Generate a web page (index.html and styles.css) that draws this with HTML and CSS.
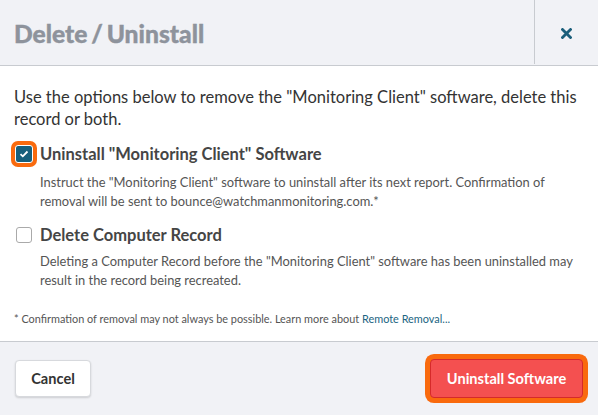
FILE: index.html
```html
<!DOCTYPE html>
<html>
<head>
<meta charset="utf-8">
<link rel="stylesheet" href="styles.css">
</head>
<body>
<div class="modal">
  <div class="header">
    <div class="title">Delete / Uninstall</div>
    <div class="close">
      <svg width="11" height="11" viewBox="0 0 11 11"><path d="M1.5 1.5 L9.5 9.5 M9.5 1.5 L1.5 9.5" stroke="#1b5f7b" stroke-width="2.8" stroke-linecap="square"/></svg>
    </div>
  </div>
  <div class="body">
    <p class="intro">Use the options below to remove the "Monitoring Client" software, delete this record or both.</p>
    <div class="option">
      <div class="row">
        <span class="check checked">
          <svg width="10" height="8" viewBox="0 0 10 8"><path d="M1.5 4.2 L3.8 6.3 L8.5 1.5" stroke="#fff" stroke-width="1.8" fill="none"/></svg>
        </span>
        <span class="label">Uninstall "Monitoring Client" Software</span>
      </div>
      <p class="desc">Instruct the "Monitoring Client" software to uninstall after its next report. Confirmation of removal will be sent to bounce@watchmanmonitoring.com.*</p>
    </div>
    <div class="option second">
      <div class="row">
        <span class="check"></span>
        <span class="label">Delete Computer Record</span>
      </div>
      <p class="desc">Deleting a Computer Record before the "Monitoring Client" software has been uninstalled may result in the record being recreated.</p>
    </div>
    <p class="note">* Confirmation of removal may not always be possible. Learn more about <a class="link">Remote Removal...</a></p>
  </div>
  <div class="footer">
    <button class="btn cancel">Cancel</button>
    <button class="btn danger">Uninstall Software</button>
  </div>
</div>
</body>
</html>
```
FILE: styles.css
```css
* { box-sizing: border-box; }
html, body { margin: 0; padding: 0; }
body {
  width: 598px;
  height: 415px;
  font-family: Lato, "Liberation Sans", sans-serif;
  background: #fff;
  overflow: hidden;
}
.modal { display: flex; flex-direction: column; height: 415px; }
.header {
  height: 66px;
  background: #f1f2f6;
  border-bottom: 1px solid #c8cbd0;
  display: flex;
  align-items: stretch;
}
.title {
  flex: 1;
  padding-left: 14px;
  display: flex;
  align-items: center;
  font-size: 24.6px;
  font-weight: 900;
  color: #8e939c;
  word-spacing: -2px;
  padding-top: 1px;
  -webkit-text-stroke: 0.4px #8e939c;
}
.close {
  width: 64px;
  border-left: 1px solid #c8cbd0;
  display: flex;
  align-items: center;
  justify-content: center;
  margin-bottom: 1px;
  padding-top: 2px;
}
.body {
  padding: 20px 14px 0 14px;
  height: 275px;
}
.intro {
  margin: 0;
  font-size: 16.5px;
  line-height: 22px;
  color: #333;
}
.option { margin-top: 12px; }
.option.second { margin-top: 13px; }
.row { display: flex; align-items: center; gap: 8px; height: 24px; }
.check {
  width: 16px;
  height: 16px;
  margin-left: 2px;
  border: 1px solid #aaa;
  border-radius: 3px;
  background: #fff;
  display: flex;
  align-items: center;
  justify-content: center;
}
.check.checked {
  width: 18px;
  height: 18px;
  margin-left: 1px;
  margin-right: -1px;
  background: #175f7c;
  border: 1px solid #fff;
  border-radius: 3px;
  box-shadow: 0 0 0 4px #f96a0e;
}
.label {
  font-size: 16.5px;
  font-weight: 700;
  color: #454545;
}
.desc {
  margin: 7px 0 0 26px;
  font-size: 12.9px;
  line-height: 18.5px;
  color: #555;
}
.second .desc { margin-top: 5px; }
.note {
  margin: 23px 0 0 0;
  font-size: 10.9px;
  color: #555;
}
.link { color: #1c6582; }
.footer {
  flex: 1;
  background: #f1f2f6;
  border-top: 1px solid #c8cbd0;
  display: flex;
  align-items: center;
  justify-content: space-between;
  padding: 0 15px 0 15px;
}
.btn {
  font-family: Lato, "Liberation Sans", sans-serif;
  font-size: 14.6px;
  font-weight: 700;
  border-radius: 4px;
  cursor: pointer;
}
.cancel {
  width: 76px;
  height: 37px;
  background: #fff;
  border: 1px solid #d7d9dd;
  color: #333;
  box-shadow: 0 1px 2px rgba(0,0,0,0.15);
}
.danger {
  width: 153px;
  height: 39px;
  margin-right: 0;
  background: #f45050;
  border: 1px solid #d62a2a;
  color: #fff;
  box-shadow: 0 0 0 5px #f96a0e;
}
```
